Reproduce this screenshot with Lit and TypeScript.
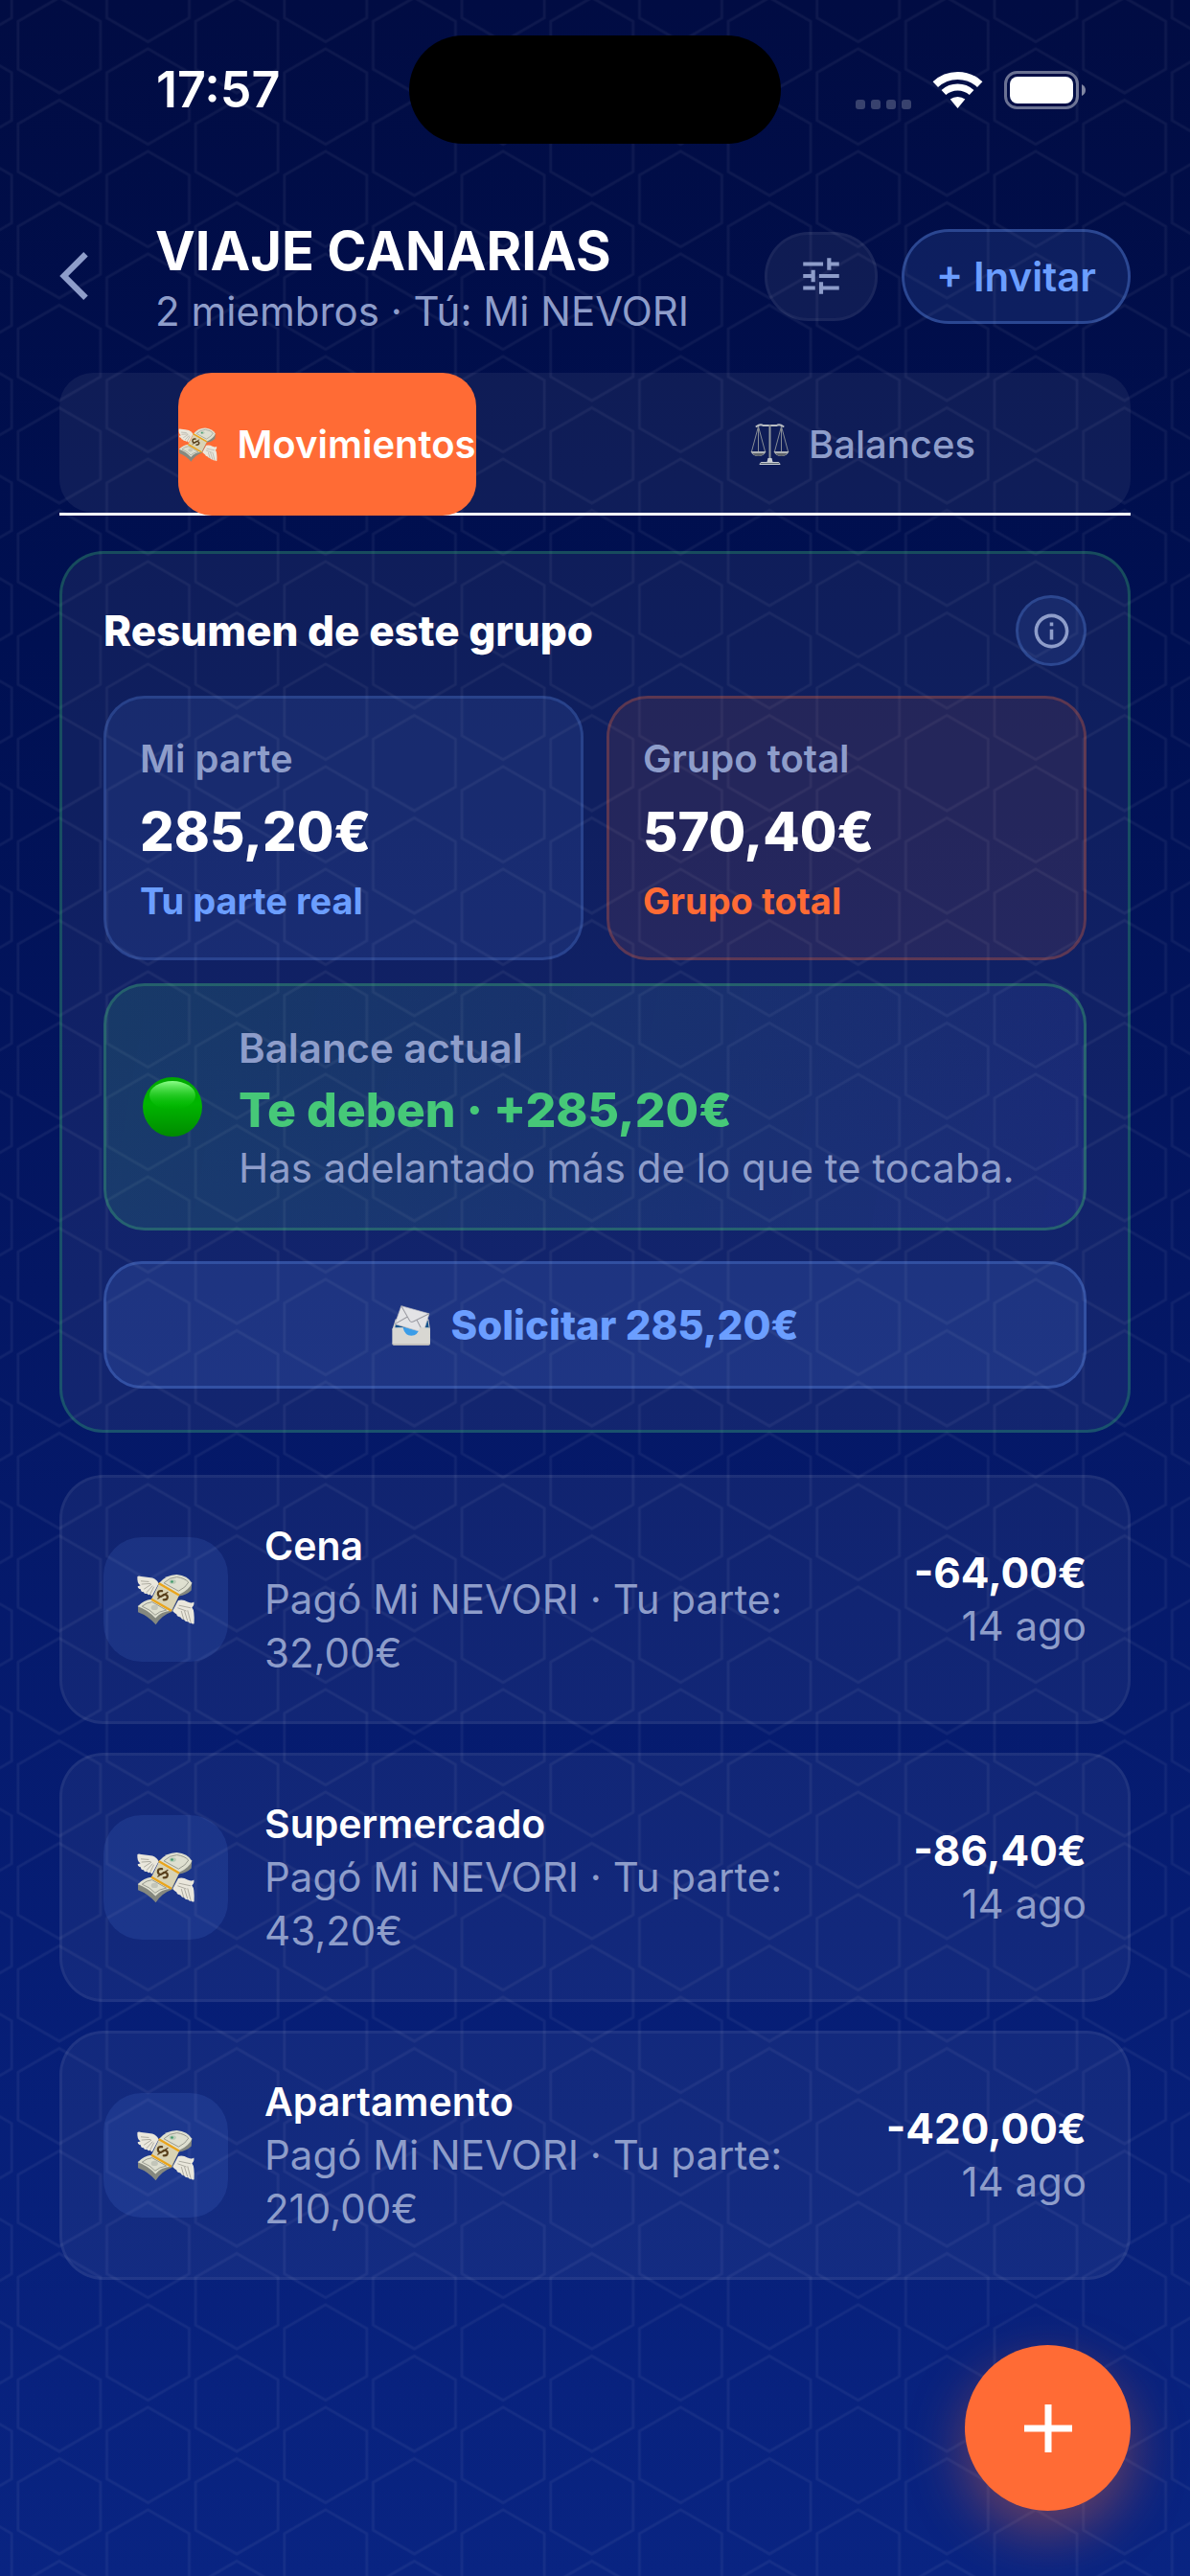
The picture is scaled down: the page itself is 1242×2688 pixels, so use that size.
import { LitElement, css, html, svg } from 'lit'
import { customElement, property, state } from 'lit/decorators.js'
import { classMap } from 'lit/directives/class-map.js'

interface Movement {
  title: string
  share: string
  amount: string
  date: string
}

const movements: Movement[] = [
  { title: 'Cena', share: '32,00€', amount: '-64,00€', date: '14 ago' },
  { title: 'Supermercado', share: '43,20€', amount: '-86,40€', date: '14 ago' },
  { title: 'Apartamento', share: '210,00€', amount: '-420,00€', date: '14 ago' },
]

const moneyIcon = html`
  <svg viewBox="30 66 188 166" aria-hidden="true">
    <path fill="#85887f" d="M208 94l-2 26q-16 16-40 18l-22 50q-34 12-52 42-24-28-57-40v-20z" />
    <path fill="#dedfd0" d="M103 96q22-26 56-27 36 4 49 27-8 22-42 38z" />
    <path fill="none" stroke="#96988e" stroke-width="3" d="M118 96q18-18 42-19 26 4 37 17-8 16-32 28z" />
    <path fill="#dedfd0" d="M78 148q-24 2-44 23 33 11 57 38 17-22 51-24z" />
    <path fill="none" stroke="#96988e" stroke-width="3" d="M80 157q-18 2-32 14 26 10 42 28 12-12 36-16z" />
    <ellipse cx="146" cy="92" rx="11" ry="7" fill="#b9cbb6" />
    <circle cx="144" cy="92" r="4" fill="#3f9a6a" />
    <ellipse cx="88" cy="175" rx="11" ry="8" fill="#c2c5b9" />
    <path fill="#d9d3b4" d="M103 97l64 38-25 50-64-37z" />
    <path fill="none" stroke="#eaa51c" stroke-width="7" d="M101 97l66 38M78 148l64 37" />
    <path fill="none" stroke="#59401c" stroke-width="7" stroke-linecap="round"
      d="M112 122q-14-2-13 10 3 12 14 5 10-8 16 1 4 12-12 12" />
    <path fill="none" stroke="#59401c" stroke-width="4" stroke-linecap="round" d="M99 146l31-20" />
    <path fill="#eae7dc" d="M33 75q4-3 12 0 20 2 36 5 16 6 20 18l-20 39q-2 2-5-2l-1-3q-6 5-12-2-7 3-10-5-9 1-9-8-10-2-10-10 6-2 9-3-12-6-10-29z" />
    <path fill="none" stroke="#8d8b81" stroke-width="2" d="M44 90l26 2M46 100l30-2M54 116l24-16M62 127l20-22M74 132l12-24" />
    <path fill="#eae7dc" d="M146 186l18-34q16-4 30 5 14 6 20 0 3 10-6 18 9 8 7 51-3 4-9-2-6 3-11-4-8 1-12-6-8 0-12-8-11-1-12-9-7-4-13-11z" />
    <path fill="none" stroke="#8d8b81" stroke-width="2" d="M166 168l38 8M162 176l28 10M174 186l8 28M184 186l10 32M194 184l10 38" />
  </svg>
`

const scalesIcon = html`
  <svg viewBox="0 0 40 44" aria-hidden="true">
    <g fill="none" stroke="#858b95" stroke-width="1">
      <path d="M8 3L1 29M8 3v26M8 3l7 26M32 3l-7 26M32 3v26M32 3l7 26" />
    </g>
    <path fill="none" stroke="#b9bec4" stroke-width="2" stroke-linecap="round" d="M6 3q4-3 7-1h14q3-2 7 1" />
    <path fill="#8f959c" d="M19 1h2v37h-2z" />
    <path fill="#aeb2b7" d="M0 29h16q-2 5-8 5t-8-5zM24 29h16q-2 5-8 5t-8-5z" />
    <path fill="#5e636b" d="M2 31h12q-2 3-6 3t-6-3zM26 31h12q-2 3-6 3t-6-3z" />
    <path fill="#c9cdd2" d="M18 36h4l1 4h6q2 1 2 3H9q0-2 2-3h6z" />
    <path fill="#5a6572" d="M10 41h20v1H10z" />
  </svg>
`

const inboxIcon = html`
  <svg viewBox="42 43 120 124" aria-hidden="true">
    <path fill="#cfd0cc" d="M54 86h102l5 32H44z" />
    <path fill="#12518c" d="M56 90h98l4 28H52z" />
    <path fill="#3b9de8" d="M60 112h86l-18 28H78z" />
    <path fill="#e3e3e6" stroke="#bcbcc2" stroke-width="2" d="M72 45l86 24-18 58-88-26z" />
    <path fill="none" stroke="#9a9aa2" stroke-width="3" d="M72 45l26 46q5 6 11 2l49-24M52 101l38-22M140 127l-20-38" />
    <path fill="#3b9de8" d="M76 112l52 14-8 14H86z" />
    <path fill="#d8d7d2" d="M44 118q0-6 6-6h27q6 25 26 25t26-25h26q6 0 6 6v42q0 6-6 6H50q-6 0-6-6z" />
    <path fill="#bdbcb6" d="M44 158v2q0 6 6 6h105q6 0 6-6v-2q0 4-6 4H50q-6 0-6-4z" />
  </svg>
`

const greenDot = html`
  <svg class="dot" viewBox="0 0 62 62" aria-hidden="true">
    <defs>
      <linearGradient id="ball" x1="0" y1="0" x2="0" y2="1">
        <stop offset="0" stop-color="#00a800" />
        <stop offset="0.45" stop-color="#00b600" />
        <stop offset="1" stop-color="#008a00" />
      </linearGradient>
      <linearGradient id="shine" x1="0" y1="0" x2="0" y2="1">
        <stop offset="0" stop-color="#8dff8a" />
        <stop offset="1" stop-color="#00c400" stop-opacity="0" />
      </linearGradient>
    </defs>
    <circle cx="31" cy="31" r="31" fill="url(#ball)" />
    <ellipse cx="31" cy="19" rx="24" ry="15" fill="url(#shine)" />
  </svg>
`

@customElement('hex-backdrop')
export class HexBackdrop extends LitElement {
  static styles = css`
    :host {
      display: block;
      position: absolute;
      inset: 0;
      background: linear-gradient(#010c43 0%, #001052 25%, #041764 50%, #061d74 75%, #092482 100%);
    }
    svg {
      display: block;
      width: 100%;
      height: 100%;
    }
  `

  render() {
    // one tile holds a full hexagon plus the four quarters around it
    const hex = (x: number, y: number) => svg`
      <path d="M${x} ${y - 49.8}l43 24.9v49.8l-43 24.9l-43-24.9v-49.8z" />
    `
    return html`
      <svg aria-hidden="true">
        <defs>
          <pattern id="hex" width="185.3" height="107" x="-30.8" y="100.7" patternUnits="userSpaceOnUse">
            <g fill="none" stroke="#fff" stroke-opacity="0.05" stroke-width="2.8">
              ${hex(92.65, 53.5)} ${hex(0, 0)} ${hex(185.3, 0)} ${hex(0, 107)} ${hex(185.3, 107)}
            </g>
          </pattern>
        </defs>
        <rect width="100%" height="100%" fill="url(#hex)" />
      </svg>
    `
  }
}

@customElement('status-bar')
export class StatusBar extends LitElement {
  static styles = css`
    :host {
      display: grid;
      grid-template-columns: 1fr 388px 1fr;
      align-items: center;
      height: 113px;
      color: #fff;
    }
    .time {
      padding-left: 101px;
      font-size: 52px;
      font-weight: 600;
      line-height: 60px;
    }
    .island {
      height: 113px;
      border-radius: 57px;
      background: #000;
    }
    .icons {
      display: flex;
      align-items: center;
      justify-content: flex-end;
      gap: 22px;
      padding-right: 46px;
    }
    .cell {
      display: flex;
      align-self: flex-end;
      gap: 6px;
    }
    .cell i {
      width: 10px;
      height: 10px;
      border-radius: 3px;
      background: rgba(255, 255, 255, 0.22);
    }
    svg {
      display: block;
    }
  `

  render() {
    return html`
      <span class="time">17:57</span>
      <span class="island"></span>
      <span class="icons">
        <span class="cell"><i></i><i></i><i></i><i></i></span>
        <svg width="53" height="39" viewBox="0 0 53 39" fill="none" stroke="#fff" aria-hidden="true">
          <path stroke-width="8" d="M3.3 14.1a34 34 0 0 1 46.4 0" />
          <path stroke-width="7" d="M11.9 22.5a22 22 0 0 1 29.2 0" />
          <path fill="#fff" stroke="none" d="M18.7 29.6a12.6 12.6 0 0 1 15.6 0L26.5 39z" />
        </svg>
        <svg width="86" height="40" viewBox="0 0 86 40" aria-hidden="true">
          <rect x="1.5" y="1.5" width="75" height="37" rx="12" fill="none" stroke="#fff" stroke-opacity="0.42" stroke-width="3" />
          <rect x="6" y="6" width="66" height="28" rx="8" fill="#fff" />
          <path fill="#fff" fill-opacity="0.5" d="M81 14q4 2 4 6t-4 6z" />
        </svg>
      </span>
    `
  }
}

@customElement('movement-row')
export class MovementRow extends LitElement {
  static styles = css`
    :host {
      display: flex;
      align-items: center;
      gap: 38px;
      padding: 43px;
      border: 3px solid rgba(255, 255, 255, 0.1);
      border-radius: 46px;
      background: rgba(255, 255, 255, 0.05);
      background-clip: padding-box;
      font-size: 42px;
      line-height: 56px;
      color: #8e9dca;
    }
    .thumb {
      display: grid;
      place-items: center;
      flex: none;
      width: 130px;
      height: 130px;
      border-radius: 40px;
      background: rgba(107, 158, 255, 0.12);
    }
    .thumb svg {
      width: 62px;
      height: 54px;
    }
    .text {
      flex: 1;
      min-width: 0;
    }
    .title {
      font-size: 41px;
      font-weight: 600;
      color: #fff;
    }
    .side {
      flex: none;
      text-align: right;
    }
    .amount {
      font-size: 44px;
      font-weight: 700;
      color: #fff;
    }
  `

  @property({ attribute: false })
    movement!: Movement

  render() {
    const { title, share, amount, date } = this.movement
    return html`
      <div class="thumb">${moneyIcon}</div>
      <div class="text">
        <div class="title">${title}</div>
        <div>Pagó Mi NEVORI · Tu parte: ${share}</div>
      </div>
      <div class="side">
        <div class="amount">${amount}</div>
        <div>${date}</div>
      </div>
    `
  }
}

@customElement('app-root')
export class AppRoot extends LitElement {
  static styles = css`
    :host {
      display: block;
      position: relative;
      box-sizing: border-box;
      min-height: 100vh;
      overflow: hidden;
      color: #fff;
      font-family: Inter, 'Noto Sans', sans-serif;
    }
    * {
      box-sizing: border-box;
    }
    button {
      margin: 0;
      padding: 0;
      border: none;
      background: none;
      background-clip: padding-box;
      font: inherit;
      color: inherit;
    }
    svg {
      display: block;
    }
    .screen {
      position: relative;
      padding: 37px 62px 300px;
    }
    header {
      display: flex;
      align-items: center;
      margin-top: 72px;
    }
    .back {
      flex: none;
      width: 100px;
    }
    .heading {
      flex: 1;
      min-width: 0;
      padding-top: 6px;
      white-space: nowrap;
    }
    h1 {
      margin: 0;
      font-size: 56px;
      font-weight: 700;
      line-height: 68px;
    }
    .members {
      font-size: 42px;
      line-height: 58px;
      color: #8e9dca;
    }
    .filter {
      display: grid;
      place-items: center;
      width: 118px;
      height: 93px;
      margin-right: 25px;
      border: 3px solid rgba(255, 255, 255, 0.1);
      border-radius: 46px;
      background-color: rgba(255, 255, 255, 0.06);
    }
    .invite {
      height: 99px;
      padding: 0 33px;
      border: 3px solid rgba(107, 158, 255, 0.4);
      border-radius: 50px;
      background-color: rgba(107, 158, 255, 0.12);
      font-size: 42px;
      font-weight: 600;
      color: #6b9eff;
    }
    .tabs {
      display: grid;
      grid-template-columns: 1fr 1fr;
      justify-items: center;
      height: 149px;
      margin-top: 35px;
      background:
        linear-gradient(#fff, #fff) bottom / 100% 3px no-repeat;
      position: relative;
    }
    .tabs::before {
      content: '';
      position: absolute;
      inset: 0 0 3px;
      border-radius: 35px;
      background: rgba(255, 255, 255, 0.06);
    }
    .tab {
      position: relative;
      display: flex;
      align-items: center;
      gap: 20px;
      border-radius: 35px;
      font-size: 40px;
      font-weight: 500;
      color: #8e9dca;
    }
    .tab.active {
      background-color: #ff6b35;
      font-weight: 600;
      color: #fff;
    }
    .tab svg {
      width: 41px;
      height: 44px;
    }
    .summary {
      margin-top: 37px;
      padding: 43px;
      border: 3px solid rgba(70, 200, 120, 0.33);
      border-radius: 46px;
      background: rgba(255, 255, 255, 0.06);
      background-clip: padding-box;
    }
    .summary-head {
      display: flex;
      align-items: center;
      justify-content: space-between;
    }
    h2 {
      margin: 0;
      font-size: 44px;
      font-weight: 800;
      line-height: 58px;
    }
    .info {
      display: grid;
      place-items: center;
      width: 74px;
      height: 74px;
      border: 3px solid rgba(107, 158, 255, 0.32);
      border-radius: 50%;
      background-color: rgba(107, 158, 255, 0.1);
    }
    .stats {
      display: grid;
      grid-template-columns: 1fr 1fr;
      gap: 24px;
      margin-top: 31px;
    }
    .stat {
      display: flex;
      flex-direction: column;
      gap: 10px;
      padding: 35px;
      border: 3px solid rgba(107, 158, 255, 0.28);
      border-radius: 43px;
      background: rgba(107, 158, 255, 0.1);
      background-clip: padding-box;
      color: #6b9eff;
    }
    .stat.group {
      border-color: rgba(255, 107, 53, 0.32);
      background-color: rgba(255, 107, 53, 0.09);
      color: #ff6b35;
    }
    .stat .label {
      font-size: 40px;
      font-weight: 600;
      line-height: 56px;
      color: #8e9dca;
    }
    .stat .value {
      font-size: 56px;
      font-weight: 800;
      line-height: 76px;
      color: #fff;
    }
    .stat .note {
      font-size: 38px;
      font-weight: 700;
      line-height: 48px;
    }
    .balance {
      display: flex;
      align-items: center;
      gap: 38px;
      margin-top: 24px;
      padding: 36px 38px;
      border: 3px solid rgba(70, 200, 120, 0.38);
      border-radius: 43px;
      background: linear-gradient(100deg, rgba(70, 200, 120, 0.15), rgba(107, 120, 255, 0.1));
      background-clip: padding-box;
      color: #8e9dca;
    }
    .dot {
      flex: none;
      width: 62px;
      height: 62px;
    }
    .balance .label {
      font-size: 42px;
      font-weight: 600;
      line-height: 58px;
    }
    .balance .value {
      font-size: 50px;
      font-weight: 800;
      line-height: 70px;
      color: #46c878;
    }
    .balance .note {
      font-size: 42px;
      line-height: 52px;
    }
    .request {
      display: flex;
      align-items: center;
      justify-content: center;
      gap: 20px;
      width: 100%;
      height: 133px;
      margin-top: 32px;
      border: 3px solid rgba(107, 158, 255, 0.36);
      border-radius: 40px;
      background-color: rgba(107, 158, 255, 0.14);
      font-size: 42px;
      font-weight: 800;
      color: #6b9eff;
    }
    .request svg {
      width: 42px;
      height: 42px;
    }
    ul {
      display: flex;
      flex-direction: column;
      gap: 30px;
      margin: 44px 0 0;
      padding: 0;
      list-style: none;
    }
    .add {
      position: absolute;
      right: 62px;
      bottom: 68px;
      display: grid;
      place-items: center;
      width: 173px;
      height: 173px;
      border-radius: 50%;
      background-color: #ff6b35;
      box-shadow: 0 23px 58px rgba(255, 107, 53, 0.4);
    }
  `

  @state()
    private tab = 'movimientos'

  render() {
    return html`
      <hex-backdrop></hex-backdrop>
      <div class="screen">
        <status-bar></status-bar>
        ${this.renderHeader()}
        <div class="tabs" role="tablist">
          ${this.renderTab('movimientos', 'Movimientos', moneyIcon)}
          ${this.renderTab('balances', 'Balances', scalesIcon)}
        </div>
        ${this.renderSummary()}
        <ul>
          ${movements.map((m) => html`<li><movement-row .movement=${m}></movement-row></li>`)}
        </ul>
      </div>
      <button class="add" aria-label="Añadir">
        <svg width="50" height="50" viewBox="0 0 50 50" fill="#fff"><path d="M0 21.5h21.5V0h7v21.5H50v7H28.5V50h-7V28.5H0z" /></svg>
      </button>
    `
  }

  private renderHeader() {
    return html`
      <header>
        <button class="back" aria-label="Atrás">
          <svg width="30" height="50" viewBox="0 2.1 11.67 19.8" fill="#8e9dca">
            <path d="M11.67 3.87L9.9 2.1 0 12l9.9 9.9 1.77-1.77L3.54 12z" />
          </svg>
        </button>
        <div class="heading">
          <h1>VIAJE CANARIAS</h1>
          <div class="members">2 miembros · Tú: Mi NEVORI</div>
        </div>
        <button class="filter" aria-label="Filtros">
          <svg width="50" height="50" viewBox="0 0 24 24" fill="#8e9dca">
            <path d="M3 17v2h6v-2H3zM3 5v2h10V5H3zm10 16v-2h8v-2h-8v-2h-2v6h2zM7 9v2H3v2h4v2h2V9H7zm14 4v-2H11v2h10zm-6-4h2V7h4V5h-4V3h-2v6z" />
          </svg>
        </button>
        <button class="invite">+ Invitar</button>
      </header>
    `
  }

  private renderTab(id: string, label: string, icon: unknown) {
    const active = this.tab === id
    return html`
      <button
        class=${classMap({ tab: true, active })}
        role="tab"
        aria-selected=${active ? 'true' : 'false'}
        @click=${() => (this.tab = id)}
      >${icon}${label}</button>
    `
  }

  private renderSummary() {
    return html`
      <section class="summary">
        <div class="summary-head">
          <h2>Resumen de este grupo</h2>
          <button class="info" aria-label="Información">
            <svg width="43" height="43" viewBox="0 0 24 24" fill="#8e9dca">
              <path d="M11 7h2v2h-2zm0 4h2v6h-2zm1-9C6.48 2 2 6.48 2 12s4.48 10 10 10 10-4.48 10-10S17.52 2 12 2zm0 18c-4.41 0-8-3.59-8-8s3.59-8 8-8 8 3.59 8 8-3.59 8-8 8z" />
            </svg>
          </button>
        </div>
        <div class="stats">
          <div class="stat">
            <div class="label">Mi parte</div>
            <div class="value">285,20€</div>
            <div class="note">Tu parte real</div>
          </div>
          <div class="stat group">
            <div class="label">Grupo total</div>
            <div class="value">570,40€</div>
            <div class="note">Grupo total</div>
          </div>
        </div>
        <div class="balance">
          ${greenDot}
          <div>
            <div class="label">Balance actual</div>
            <div class="value">Te deben · +285,20€</div>
            <div class="note">Has adelantado más de lo que te tocaba.</div>
          </div>
        </div>
        <button class="request">${inboxIcon}Solicitar 285,20€</button>
      </section>
    `
  }
}

declare global {
  interface HTMLElementTagNameMap {
    'app-root': AppRoot
    'hex-backdrop': HexBackdrop
    'status-bar': StatusBar
    'movement-row': MovementRow
  }
}
